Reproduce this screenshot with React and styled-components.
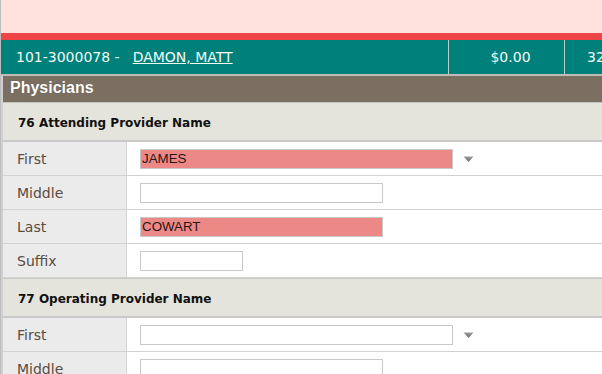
import React from 'react';
import styled, { createGlobalStyle } from 'styled-components';

const GlobalStyle = createGlobalStyle`
  html, body {
    margin: 0;
    padding: 0;
    background: #ffffff;
    overflow: hidden;
  }
`;

const Page = styled.div`
  width: 700px;
  border-left: 1px solid #bdbdbd;
  font-family: "DejaVu Sans", Verdana, sans-serif;
`;

const Banner = styled.div`
  height: 33px;
  background: #ffe1de;
  border-bottom: 7px solid #ef4546;
`;

const PatientBar = styled.div`
  display: grid;
  grid-template-columns: 448px 116px 1fr;
  height: 34px;
  background: #00807a;
  border-bottom: 2px solid #bfbcb8;
  color: #f2fbf8;
  font-size: 14px;
`;

const PatientCell = styled.div`
  display: flex;
  align-items: center;
  justify-content: ${(p) => (p.$center ? 'center' : 'flex-start')};
  padding: 0 0 1px ${(p) => p.$pad || 0}px;
  border-right: 1px solid #b9cfcb;
  white-space: nowrap;
  overflow: hidden;
`;

const PatientLink = styled.a`
  color: #f2fbf8;
  text-decoration: underline;
  margin-left: 13px;
`;

const Panel = styled.div`
  border-left: 2px solid #cfcfcf;
`;

const PanelTitle = styled.div`
  height: 27px;
  display: flex;
  align-items: center;
  padding: 0 0 2px 7px;
  box-sizing: border-box;
  background: #7b6f62;
  border-bottom: 1px solid #c4c1bb;
  color: #ffffff;
  font-family: "Liberation Sans", Arial, sans-serif;
  font-weight: bold;
  font-size: 16px;
  text-shadow: 0 0 1px rgba(0, 0, 0, 0.4);
`;

const SectionHeader = styled.div`
  height: 37px;
  box-sizing: border-box;
  display: flex;
  align-items: center;
  padding: 2px 0 0 15px;
  background: #e5e4dc;
  border-top: ${(p) => (p.$first ? 'none' : '1px solid #c9c9c9')};
  border-bottom: 2px solid #c9c9c9;
  color: #111111;
  font-weight: bold;
  font-size: 12px;
  height: ${(p) => (p.$first ? 39 : 40)}px;
`;

const FormRow = styled.div`
  display: grid;
  grid-template-columns: 124px 1fr;
  height: 34px;
  border-bottom: 1px solid #d3d3d3;
  box-sizing: border-box;
`;

const Label = styled.div`
  display: flex;
  align-items: center;
  padding-left: 14px;
  background: #ebebeb;
  border-right: 1px solid #d3d3d3;
  color: #5a4c3e;
  font-size: 14px;
`;

const Field = styled.div`
  display: flex;
  align-items: center;
  gap: 10px;
  padding-left: 13px;
`;

const TextInput = styled.input`
  box-sizing: border-box;
  width: ${(p) => p.$w}px;
  height: 20px;
  margin: 0;
  padding: 0 1px;
  border: 1px solid #c8c8c8;
  background: ${(p) => (p.$flag ? '#ec8987' : '#ffffff')};
  color: #2a1414;
  font-family: "Liberation Sans", Arial, sans-serif;
  font-size: 13.33px;
  outline: none;
`;

const Arrow = () => (
  <svg width="11" height="9" viewBox="0 0 11 9">
    <defs>
      <linearGradient id="arr" x1="0" y1="0" x2="0" y2="1">
        <stop offset="0" stopColor="#9a9a9a" />
        <stop offset="1" stopColor="#6e6e6e" />
      </linearGradient>
    </defs>
    <path d="M0.5 2.5 H10.5 L5.5 8 Z" fill="url(#arr)" />
  </svg>
);

const sections = [
  {
    title: '76 Attending Provider Name',
    rows: [
      { label: 'First', value: 'JAMES', w: 313, select: true },
      { label: 'Middle', value: '', w: 243 },
      { label: 'Last', value: 'COWART', w: 243 },
      { label: 'Suffix', value: '', w: 103 },
    ],
  },
  {
    title: '77 Operating Provider Name',
    rows: [
      { label: 'First', value: '', w: 313, select: true },
      { label: 'Middle', value: '', w: 243 },
      { label: 'Last', value: '', w: 243 },
      { label: 'Suffix', value: '', w: 103 },
    ],
  },
];

export default function App() {
  return (
    <Page>
      <GlobalStyle />
      <Banner />
      <PatientBar>
        <PatientCell $pad={15}>
          101-3000078 -
          <PatientLink href="#">DAMON, MATT</PatientLink>
        </PatientCell>
        <PatientCell $center $pad={8}>$0.00</PatientCell>
        <PatientCell $pad={22}>32</PatientCell>
      </PatientBar>
      <Panel>
        <PanelTitle>Physicians</PanelTitle>
        {sections.map((s, i) => (
          <React.Fragment key={s.title}>
            <SectionHeader $first={i === 0}>{s.title}</SectionHeader>
            {s.rows.map((r) => (
              <FormRow key={r.label}>
                <Label>{r.label}</Label>
                <Field>
                  <TextInput
                    $w={r.w}
                    $flag={!!r.value}
                    defaultValue={r.value}
                  />
                  {r.select && <Arrow />}
                </Field>
              </FormRow>
            ))}
          </React.Fragment>
        ))}
      </Panel>
    </Page>
  );
}
